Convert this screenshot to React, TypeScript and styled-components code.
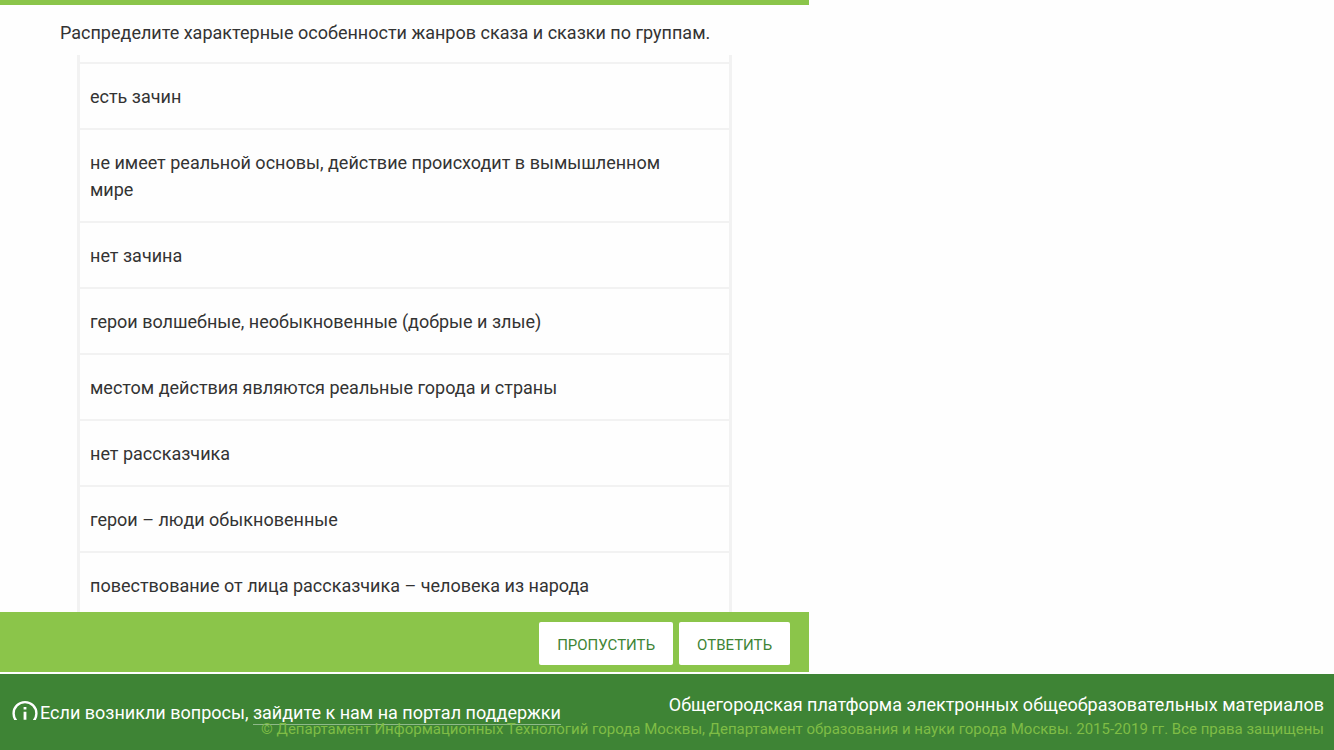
import React from "react";
import styled, { createGlobalStyle } from "styled-components";

const GlobalStyle = createGlobalStyle`
  *, *::before, *::after { box-sizing: border-box; }
  body {
    margin: 0;
    background: #fefefe;
    color: #333;
    font-family: Roboto, "Liberation Sans", sans-serif;
    font-size: 18px;
    line-height: 27px;
  }
`;

const Page = styled.div`
  display: flex;
  flex-direction: column;
  height: 100vh;
`;

const Exercise = styled.main`
  display: flex;
  flex-direction: column;
  flex: 1;
  min-height: 0;
  width: 60.65%;
  margin-bottom: 2px;
  border-top: 5px solid #8bc54a;
`;

const Question = styled.h1`
  margin: 0;
  padding: 14px 60px 9px;
  font-size: 18px;
  font-weight: 400;
  white-space: nowrap;
`;

const AnswerScroller = styled.div`
  flex: 1;
  min-height: 0;
  overflow: hidden;
  padding: 0 77px;
`;

const AnswerList = styled.ul`
  margin: 0;
  padding: 7px 0 0;
  list-style: none;
  border: solid #f2f2f2;
  border-width: 0 3px;
`;

const Answer = styled.li`
  padding: 19px 60px 18px 10px;
  border-top: 2px solid #f2f2f2;
`;

const ActionBar = styled.div`
  display: flex;
  justify-content: flex-end;
  gap: 6px;
  padding: 10px 19px 7px;
  background: #8bc54a;
`;

const ActionButton = styled.button`
  height: 43px;
  padding: 2px 18px 0;
  border: 0;
  border-radius: 2px;
  background: #fff;
  color: #3e8435;
  font: 400 15px/20px Roboto, "Liberation Sans", sans-serif;
  text-transform: uppercase;
  cursor: pointer;
`;

const Footer = styled.footer`
  display: grid;
  grid-template-columns: 1fr;
  padding: 18px 10px 9px 12px;
  background: #3e8435;
  color: #fff;
`;

const Support = styled.div`
  grid-area: 1 / 1;
  display: flex;
  align-items: flex-start;
  padding-top: 8px;
`;

const IconClip = styled.span`
  display: flex;
  width: 26px;
  height: 20px;
  margin-right: 2px;
  overflow: hidden;
`;

const SupportLink = styled.a`
  display: inline-block;
  line-height: 23px;
  color: inherit;
  text-decoration: none;
  border-bottom: 1px solid #8fb98a;
`;

const SupportText = styled.span`
  line-height: 25px;
`;

const About = styled.div`
  grid-area: 1 / 1;
  justify-self: end;
  text-align: right;
`;

const Platform = styled.p`
  margin: 0;
  line-height: 26px;
`;

const Copyright = styled.p`
  margin: 0;
  color: #7fbd45;
  font-size: 15px;
  line-height: 23px;
`;

const answers = [
  "есть зачин",
  "не имеет реальной основы, действие происходит в вымышленном мире",
  "нет зачина",
  "герои волшебные, необыкновенные (добрые и злые)",
  "местом действия являются реальные города и страны",
  "нет рассказчика",
  "герои – люди обыкновенные",
  "повествование от лица рассказчика – человека из народа",
];

function InfoIcon() {
  return (
    <svg width="26" height="26" viewBox="0 0 26 26" fill="none" stroke="#fff" aria-hidden="true">
      <circle cx="13" cy="13.5" r="11.4" strokeWidth="2.4" />
      <path d="M13 7v2.6M13 11.7v8" strokeWidth="2.8" />
    </svg>
  );
}

export default function App() {
  return (
    <Page>
      <GlobalStyle />
      <Exercise>
        <Question>Распределите характерные особенности жанров сказа и сказки по группам.</Question>
        <AnswerScroller>
          <AnswerList>
            {answers.map((text) => (
              <Answer key={text}>{text}</Answer>
            ))}
          </AnswerList>
        </AnswerScroller>
        <ActionBar>
          <ActionButton type="button">Пропустить</ActionButton>
          <ActionButton type="button">Ответить</ActionButton>
        </ActionBar>
      </Exercise>
      <Footer>
        <Support>
          <IconClip>
            <InfoIcon />
          </IconClip>
          <SupportText>
            Если возникли вопросы, <SupportLink href="#support">зайдите к нам на портал поддержки</SupportLink>
          </SupportText>
        </Support>
        <About>
          <Platform>Общегородская платформа электронных общеобразовательных материалов</Platform>
          <Copyright>
            © Департамент Информационных Технологий города Москвы, Департамент образования и науки города Москвы. 2015-2019 гг. Все права защищены
          </Copyright>
        </About>
      </Footer>
    </Page>
  );
}
